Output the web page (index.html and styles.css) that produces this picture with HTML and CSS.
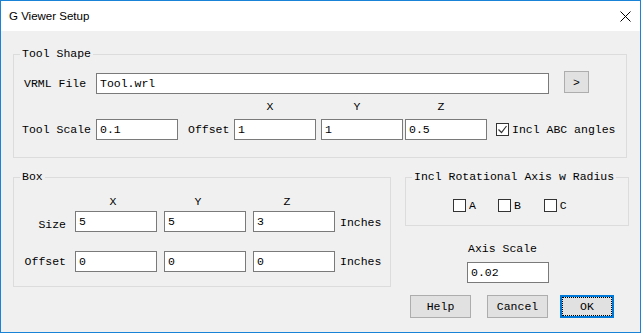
FILE: index.html
```html
<!DOCTYPE html>
<html lang="en">
<head>
  <meta charset="UTF-8" />
  <title>G Viewer Setup</title>
  <link rel="stylesheet" href="styles.css">
</head>
<body>

  <div class="window">
    <div class="titlebar">
      <span class="title">G Viewer Setup</span>
      <svg class="close" width="11" height="11" viewBox="0 0 11 11">
        <path d="M0.5 0.5 L10.5 10.5 M10.5 0.5 L0.5 10.5" stroke="#000" stroke-width="1" fill="none"/>
      </svg>
    </div>

    <div class="client">

      <!-- Tool Shape -->
      <div class="group tool-shape">
        <span class="legend">Tool Shape</span>
        <div class="row vrml">
          <label class="lbl">VRML File</label>
          <input class="field wide" type="text" value="Tool.wrl" readonly />
          <button class="btn browse">&gt;</button>
        </div>
        <div class="axes tool-axes">
          <span>X</span><span>Y</span><span>Z</span>
        </div>
        <div class="row scale">
          <label class="lbl scale-lbl">Tool Scale</label>
          <input class="field" type="text" value="0.1" readonly />
          <label class="lbl offset-lbl">Offset</label>
          <input class="field" type="text" value="1" readonly />
          <input class="field y" type="text" value="1" readonly />
          <input class="field z" type="text" value="0.5" readonly />
          <span class="check checked">
            <svg width="13" height="13" viewBox="0 0 13 13">
              <path d="M2.5 6.5 L5.5 9.5 L10.5 3" stroke="#333" stroke-width="1.2" fill="none"/>
            </svg>
          </span>
          <span class="check-text">Incl ABC angles</span>
        </div>
      </div>

      <div class="lower">

        <!-- Box -->
        <div class="group box">
          <span class="legend">Box</span>
          <div class="axes box-axes">
            <span>X</span><span>Y</span><span>Z</span>
          </div>
          <div class="row box-row">
            <label class="lbl side-lbl size-lbl">Size</label>
            <input class="field" type="text" value="5" readonly />
            <input class="field gap7" type="text" value="5" readonly />
            <input class="field gap7" type="text" value="3" readonly />
            <span class="unit first-unit">Inches</span>
          </div>
          <div class="row box-row second">
            <label class="lbl side-lbl">Offset</label>
            <input class="field" type="text" value="0" readonly />
            <input class="field gap7" type="text" value="0" readonly />
            <input class="field gap7" type="text" value="0" readonly />
            <span class="unit">Inches</span>
          </div>
        </div>

        <div class="side">
          <div class="group rot">
            <span class="legend">Incl Rotational Axis w Radius</span>
            <div class="checks">
              <span class="check-item"><span class="check"></span>A</span>
              <span class="check-item"><span class="check"></span>B</span>
              <span class="check-item c"><span class="check"></span>C</span>
            </div>
          </div>
          <div class="axis-lbl">Axis Scale</div>
          <input class="field axis-field" type="text" value="0.02" readonly />
          <div class="buttons">
            <button class="btn help">Help</button>
            <button class="btn cancel">Cancel</button>
            <button class="btn ok">OK</button>
          </div>
        </div>

      </div>
    </div>
  </div>

</body>
</html>
```

FILE: styles.css
```css
body {
  margin: 0;
  background: #fff;
  font-family: "Liberation Mono", "Courier New", monospace;
  font-size: 11.5px;
  color: #000;
}

.window {
  width: 641px;
  height: 333px;
  box-sizing: border-box;
  border: 1px solid #1883d7;
  background: #f0f0f0;
  display: flex;
  flex-direction: column;
}

.titlebar {
  height: 30px;
  flex: none;
  background: #fff;
  display: flex;
  align-items: center;
  justify-content: space-between;
  padding: 0 9px 0 8px;
  font-family: "Liberation Sans", Arial, sans-serif;
  font-size: 11.5px;
}

.close {
  display: block;
}

.client {
  padding: 23px 0 0 12px;
}

/* group boxes */
.group {
  position: relative;
  box-sizing: border-box;
  border: 1px solid #dcdcdc;
}

.legend {
  position: absolute;
  top: -8px;
  left: 6px;
  padding: 0 2px;
  line-height: 14px;
  background: #f0f0f0;
  white-space: nowrap;
}

.row {
  display: flex;
  align-items: flex-start;
}

.lbl {
  line-height: 21px;
  white-space: nowrap;
}

.field {
  box-sizing: border-box;
  width: 82px;
  height: 21px;
  margin: 0;
  padding: 0 3px;
  border: 1px solid #7a7a7a;
  background: #fff;
  font: inherit;
  color: #000;
  outline: none;
}

.btn {
  box-sizing: border-box;
  margin: 0;
  padding: 0;
  border: 1px solid #adadad;
  background: #e1e1e1;
  font: inherit;
  color: #000;
}

/* Tool Shape */
.tool-shape {
  width: 614px;
  height: 104px;
  padding: 16px 0 0 8px;
}

.vrml .lbl {
  width: 72px;
  margin: 2px 0 0 2px;
}

.field.wide {
  width: 453px;
  margin-top: 2px;
}

.browse {
  width: 25px;
  height: 22px;
  margin-left: 15px;
}

.axes {
  display: flex;
  line-height: 14px;
}

.axes span {
  text-align: center;
}

.tool-axes {
  margin-top: 6px;
}

.tool-axes span {
  width: 72px;
}

.tool-axes span:nth-child(1) { margin-left: 212px; }
.tool-axes span:nth-child(2) { margin-left: 15px; }
.tool-axes span:nth-child(3) { margin-left: 12px; }

.scale {
  margin-top: 5px;
}

.scale-lbl {
  width: 74px;
}

.offset-lbl {
  width: 46px;
  margin-left: 10px;
}

.scale .y { margin-left: 5px; }
.scale .z { margin-left: 2px; }

.check {
  display: inline-block;
  box-sizing: border-box;
  width: 13px;
  height: 13px;
  border: 1px solid #333;
  background: #fff;
  position: relative;
}

.check svg {
  position: absolute;
  top: -1px;
  left: -1px;
}

.scale .check {
  margin: 4px 0 0 9px;
}

.check-text {
  margin-left: 3px;
  line-height: 21px;
}

/* lower part */
.lower {
  display: flex;
  align-items: flex-start;
  margin-top: 19px;
}

.box {
  width: 378px;
  height: 110px;
  padding-top: 17px;
}

.box-axes span {
  width: 60px;
}

.box-axes span:nth-child(1) { margin-left: 69px; }
.box-axes span:nth-child(2) { margin-left: 25px; }
.box-axes span:nth-child(3) { margin-left: 29px; }

.box-row {
  margin-top: 2px;
}

.box-row.second {
  margin-top: 16px;
}

.side-lbl {
  box-sizing: border-box;
  width: 61px;
  padding-right: 9px;
  text-align: right;
}

.size-lbl {
  padding-top: 3px;
}

.gap7 {
  margin-left: 7px;
}

.unit {
  margin-left: 5px;
  line-height: 21px;
}

.first-unit {
  padding-top: 1px;
}

.side {
  width: 224px;
  margin-left: 14px;
}

.rot {
  height: 49px;
  padding: 21px 0 0 47px;
}

.checks {
  display: flex;
  gap: 22px;
  line-height: 13px;
}

.check-item {
  display: flex;
  align-items: flex-start;
}

.check-item .check {
  margin-right: 3px;
}

.check-item.c {
  margin-left: 1px;
}

.axis-lbl {
  margin: 16px 0 0 63px;
  line-height: 14px;
}

.axis-field {
  display: block;
  margin: 6px 0 0 62px;
}

.buttons {
  display: flex;
  margin-top: 12px;
}

.buttons .btn {
  width: 61px;
  height: 23px;
}

.help { margin-left: 5px; }
.cancel { margin-left: 16px; }

.buttons .ok {
  width: 54px;
  margin-left: 12px;
  border: 2px solid #0078d7;
  outline: 1px dotted #000;
  outline-offset: -3px;
}
```
